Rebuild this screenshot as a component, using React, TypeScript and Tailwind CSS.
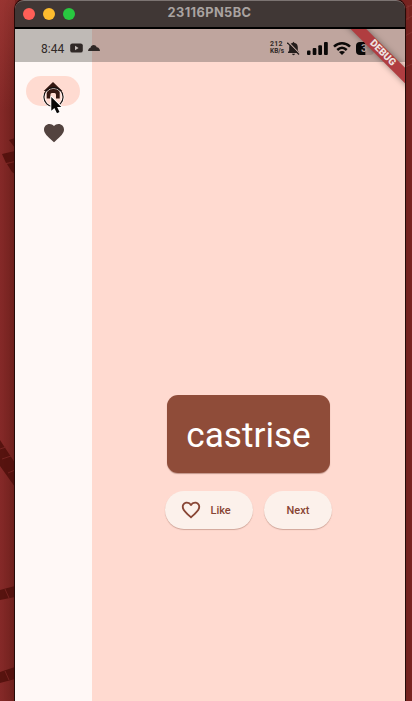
import type { ReactNode } from "react";

const HEART =
  "M12 21.35l-1.45-1.32C5.4 15.36 2 12.28 2 8.5 2 5.42 4.42 3 7.5 3c1.74 0 3.41.81 4.5 2.09C13.09 3.81 14.76 3 16.5 3 19.58 3 22 5.42 22 8.5c0 3.78-3.4 6.86-8.55 11.54z";
const HEART_OUTLINE =
  "M16.5 3c-1.74 0-3.41.81-4.5 2.09C10.91 3.81 9.24 3 7.5 3 4.42 3 2 5.42 2 8.5c0 3.78 3.4 6.86 8.55 11.54L12 21.35l1.45-1.32C18.6 15.36 22 12.28 22 8.5 22 5.42 19.58 3 16.5 3zm-4.4 15.55l-.1.1-.1-.1C7.14 14.24 4 11.39 4 8.5 4 6.5 5.5 5 7.5 5c1.54 0 3.04.99 3.57 2.36h1.87C13.46 5.99 14.96 5 16.5 5c2 0 3.5 1.5 3.5 3.5 0 2.89-3.14 5.74-7.9 10.05z";

function Wallpaper() {
  return (
    <svg className="absolute inset-0" width="412" height="701" viewBox="0 0 412 701">
      <defs>
        <linearGradient id="wallLeft" x1="0" x2="1" y1="0" y2="0">
          <stop offset="0" stopColor="#852928" />
          <stop offset="1" stopColor="#74231f" />
        </linearGradient>
        <linearGradient id="wallTop" x1="0" x2="0" y1="0" y2="1">
          <stop offset="0" stopColor="#a63c38" stopOpacity=".6" />
          <stop offset="1" stopColor="#a63c38" stopOpacity="0" />
        </linearGradient>
      </defs>
      <rect width="412" height="701" fill="#7a2421" />
      <rect width="15" height="701" fill="url(#wallLeft)" />
      <rect width="15" height="110" fill="url(#wallTop)" />
      <path d="M9 140L15 138V148Z M2 154L15 151V161L6 163Z M7 164L15 162V174L12 172Z" fill="#57130f" />
      <path d="M0 440L15 463V487L0 466Z M0 590L15 586V597L0 600Z M0 672L15 667V679L0 683Z" fill="#57130f" />
      <path d="M0 449L6 447M2 459L11 456M8 473L15 470M5 589L9 598M5 671L9 680" stroke="#762421" strokeWidth="1" />
      <path d="M405 8L412 5M405 20L412 16M408 5V20M405 36L412 32M405 67L412 64" stroke="#8b3431" strokeWidth="1" />
    </svg>
  );
}

function TitleBar() {
  return (
    <header className="relative flex h-[27px] shrink-0 items-center rounded-t-[9px] border-t border-[#7c7472] bg-[#403735] pl-2">
      <div className="flex gap-2">
        <span className="size-3 rounded-full bg-[#ff5f57]" />
        <span className="size-3 rounded-full bg-[#febc2e]" />
        <span className="size-3 rounded-full bg-[#28c840]" />
      </div>
      <h1 className="flex-1 pr-[61px] pb-px text-center font-['Inter',sans-serif] text-[12.8px] leading-none font-bold tracking-[0.4px] text-[#aaa3a1]">
        23116PN5BC
      </h1>
    </header>
  );
}

function StatusBar() {
  return (
    <div className="flex h-[33px] shrink-0 bg-[#bfa59e] text-[#302927]">
      <div className="flex w-[77px] shrink-0 items-center bg-[#bfbab6] pt-[5px] pl-[26px]">
        <span className="w-[29px] shrink-0 pt-px text-[12px] leading-none">8:44</span>
        <svg className="-mt-px shrink-0" width="13" height="10" viewBox="0 0 13 10">
          <rect x=".2" y=".4" width="12.6" height="9.2" rx="2.2" fill="#302927" />
          <path d="M5 2.8L8.6 5L5 7.2Z" fill="#c3bcb8" />
        </svg>
        <svg className="-mt-px ml-[5px] shrink-0" width="12" height="8" viewBox="0 0 12 8">
          <path d="M0 7C.2 5 1.4 4 2.5 3.7C3 .2 7.8 0 8.7 3.2C10.8 3.2 11.8 5 12 7Z" fill="#302927" />
        </svg>
      </div>
      <div className="flex flex-1 items-center pt-[5px] pl-[178px]">
        <div className="w-[17px] text-[7px] leading-[7.5px] font-bold">
          <div className="tracking-[0.2px]">212</div>
          <div className="text-[6.5px]">KB/s</div>
        </div>
        <svg className="shrink-0" width="13" height="15" viewBox="0 0 13 15">
          <path d="M6.5 .8L7.6 2C10 2.5 10.8 4.3 10.8 6.5V9.5L12 11.2V12H1V11.2L2.2 9.5V6.5C2.2 4.3 3.2 2.5 5.4 2ZM5 12.8H8C7.8 14.6 5.2 14.6 5 12.8Z" fill="#241d1b" />
          <path d="M1.2 1L13 13" stroke="#bfa59e" strokeWidth="1.2" />
          <path d="M.3 1.6L12 13.5" stroke="#241d1b" strokeWidth="1.2" />
        </svg>
        <svg className="ml-[7px] shrink-0" width="21" height="13" viewBox="0 0 21 13">
          <rect y="8.5" width="3.5" height="4.5" rx="1" fill="#0b0908" />
          <rect x="5.7" y="6" width="3.7" height="7" rx="1" fill="#0b0908" />
          <rect x="11.3" y="3.2" width="3.7" height="9.8" rx="1" fill="#0b0908" />
          <rect x="17" y="0" width="3.8" height="13" rx="1" fill="#0b0908" />
        </svg>
        <svg className="ml-[5px] shrink-0" width="18" height="13" viewBox="0 0 18 13">
          <path d="M1 4.7C5.8 .2 12.2 .2 17 4.7M4.3 8C7.2 5.2 10.8 5.2 13.7 8" fill="none" stroke="#0b0908" strokeWidth="2.5" />
          <path d="M6 9.9Q9 7.9 12 9.9L9 12.9Z" fill="#0b0908" />
        </svg>
        <div className="ml-[5px] flex h-[13px] w-[18px] shrink-0 items-center overflow-hidden rounded-[4px] bg-linear-to-r from-[#0b0908] from-50% to-[#a78f89] to-54% pl-[5px] text-[11px] leading-none font-bold">
          <span className="text-[#b7a29c]">3</span>
        </div>
      </div>
    </div>
  );
}

function DebugBanner() {
  return (
    <div className="pointer-events-none absolute top-[29px] right-0 size-[64px] overflow-hidden">
      <div className="absolute top-[17.8px] left-[-9px] flex h-[10.6px] w-[100px] rotate-45 items-center justify-center bg-[#b03d40] pl-[2px] shadow-[0_0_6px_rgba(0,0,0,0.4)]">
        <span className="text-[10px] leading-none font-black text-[#eee3e2]">DEBUG</span>
      </div>
    </div>
  );
}

function Pointer() {
  return (
    <svg className="absolute top-[84px] left-[40px]" width="28" height="36" viewBox="0 0 28 36">
      <circle cx="13.5" cy="13" r="8.6" fill="none" stroke="#fff" strokeOpacity=".75" strokeWidth="1" />
      <path d="M3.5 10A10.4 10.4 0 1 0 23.5 10" fill="none" stroke="#fff" strokeWidth="1" />
      <circle cx="13.5" cy="13" r="9.6" fill="none" stroke="#161110" strokeWidth="1.1" />
      <path
        d="M11.3 13V26.8L14.4 24L17 29.2L19.5 28L17.1 23H21.3Z"
        fill="#090706"
        stroke="#fff"
        strokeWidth="1.8"
        strokeLinejoin="round"
        paintOrder="stroke"
      />
    </svg>
  );
}

function NavigationRail() {
  return (
    <nav className="flex w-[77px] shrink-0 flex-col items-center bg-[#fff8f6] pt-[14px]">
      <div className="mr-px flex h-[30px] w-[54px] items-center justify-center rounded-full bg-[#ffdbd1]">
        <svg width="20" height="18" viewBox="0 0 20 18">
          <path d="M10 0L19.3 9H16.7V16.5H13V12.8Q13 11 11.5 11H8.9Q7.4 11 7.4 12.8V16.5H3.7V9H.7Z" fill="#351812" />
        </svg>
      </div>
      <svg className="mt-[15px]" width="24" height="24" viewBox="0 0 24 24" fill="#53433f">
        <path d={HEART} />
      </svg>
    </nav>
  );
}

function PillButton({ children, className }: { children: ReactNode; className: string }) {
  return (
    <button
      className={`flex h-[38px] items-center rounded-full bg-[#fcf1eb] text-[11px] leading-none font-medium text-[#884534] shadow-[0_1px_1px_rgba(100,45,30,0.3)] ${className}`}
    >
      {children}
    </button>
  );
}

function GeneratorPage() {
  return (
    <main className="flex flex-1 flex-col items-center bg-[#ffdad0] pt-[333px]">
      <div className="flex h-[78px] w-[163px] items-center justify-center rounded-[11px] bg-[#8f4c39] pt-[4px] text-[35.2px] leading-none text-white shadow-[0_1px_1px_rgba(100,45,30,0.4)]">
        castrise
      </div>
      <div className="mt-[18px] flex gap-[11px]">
        <PillButton className="w-[88px] pl-[15px]">
          <svg className="mr-[8.5px]" width="22" height="22" viewBox="0 0 24 24" fill="#884534">
            <path d={HEART_OUTLINE} />
          </svg>
          Like
        </PillButton>
        <PillButton className="w-[68px] justify-center">Next</PillButton>
      </div>
    </main>
  );
}

export default function App() {
  return (
    <div className="relative h-[701px] w-[412px] overflow-hidden font-['Roboto',sans-serif]">
      <Wallpaper />
      <div className="relative ml-[15px] flex h-full w-[390px] flex-col rounded-t-[9px] shadow-[0_0_0_1px_#250b09,0_0_12px_rgba(45,0,0,0.2)]">
        <TitleBar />
        <div className="h-[2px] shrink-0 bg-black" />
        <StatusBar />
        <div className="flex min-h-0 flex-1">
          <NavigationRail />
          <GeneratorPage />
        </div>
        <DebugBanner />
      </div>
      <Pointer />
    </div>
  );
}
